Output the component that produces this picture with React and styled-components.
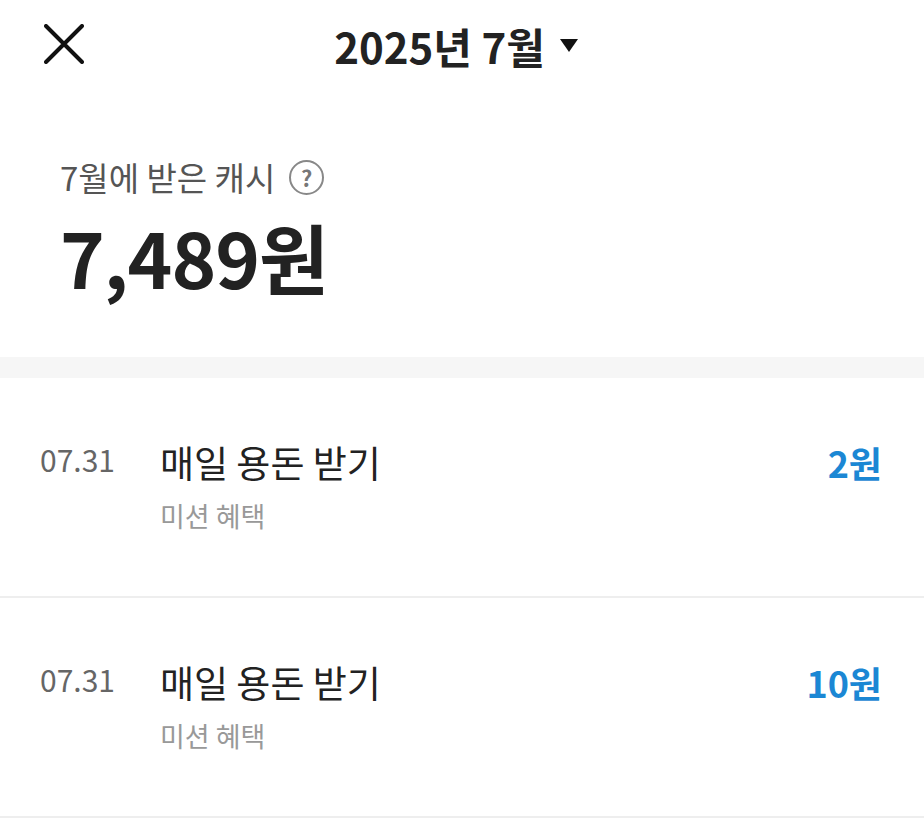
import React from 'react';
import styled, { createGlobalStyle } from 'styled-components';

const GlobalStyle = createGlobalStyle`
  html, body { margin: 0; padding: 0; background: #fff; }
  body { font-family: "Noto Sans CJK KR", "Noto Sans", sans-serif; color: #222; }
`;

const items = [
  { date: '07.31', title: '매일 용돈 받기', sub: '미션 혜택', amount: '2원' },
  { date: '07.31', title: '매일 용돈 받기', sub: '미션 혜택', amount: '10원' },
];

const App = () => {
  return (
    <Page>
      <GlobalStyle />
      <Header>
        <CloseBtn aria-label="닫기">
          <svg width="40" height="40" viewBox="0 0 40 40">
            <path d="M2 2 L38 38 M38 2 L2 38" stroke="#111" strokeWidth="4" strokeLinecap="round" />
          </svg>
        </CloseBtn>
        <MonthPicker>
          2025년 7월
          <Caret />
        </MonthPicker>
      </Header>

      <Summary>
        <Label>
          7월에 받은 캐시
          <HelpIcon>?</HelpIcon>
        </Label>
        <Total>7,489원</Total>
      </Summary>

      <Band />

      <List>
        {items.map((it, i) => (
          <Row key={i}>
            <DateText>{it.date}</DateText>
            <Info>
              <Title>{it.title}</Title>
              <Sub>{it.sub}</Sub>
            </Info>
            <Amount>{it.amount}</Amount>
          </Row>
        ))}
      </List>
    </Page>
  );
};

export default App;

const Page = styled.div` width: 924px; min-height: 840px; background: #fff; `;
const Header = styled.div` position: relative; height: 90px; display: flex; align-items: center; justify-content: center; `;
const CloseBtn = styled.div` position: absolute; left: 44px; top: 24px; width: 40px; height: 40px; display: flex; `;
const MonthPicker = styled.div` display: flex; align-items: center; gap: 15px; font-size: 42px; font-weight: 700; color: #222; margin-right: 12px; `;
const Caret = styled.span` width: 0; height: 0; border-left: 9px solid transparent; border-right: 9px solid transparent; border-top: 13px solid #111; `;
const Summary = styled.div` padding: 63px 60px 46px; `;
const Label = styled.div` display: flex; align-items: center; gap: 14px; font-size: 33px; color: #555; line-height: 48px; `;
const HelpIcon = styled.span` width: 31px; height: 31px; border: 2.5px solid #888; border-radius: 50%; color: #777; font-size: 22px; font-weight: 700; display: flex; align-items: center; justify-content: center; line-height: 1; `;
const Total = styled.div` font-size: 76px; font-weight: 700; color: #222; line-height: 110px; letter-spacing: -1px; `;
const Band = styled.div` height: 21px; background: #f6f6f6; `;
const List = styled.div` display: flex; flex-direction: column; `;
const Row = styled.div` display: flex; align-items: flex-start; height: 220px; box-sizing: border-box; padding: 60px 42px 0 40px; border-bottom: 2px solid #eeeeee; `;
const DateText = styled.div` width: 120px; font-size: 30px; color: #666; line-height: 42px; `;
const Info = styled.div` flex: 1; display: flex; flex-direction: column; gap: 12px; `;
const Title = styled.div` font-size: 37px; color: #222; line-height: 48px; `;
const Sub = styled.div` font-size: 27px; color: #999; line-height: 36px; `;
const Amount = styled.div` font-size: 36px; font-weight: 700; color: #1b87d4; line-height: 48px; `;
